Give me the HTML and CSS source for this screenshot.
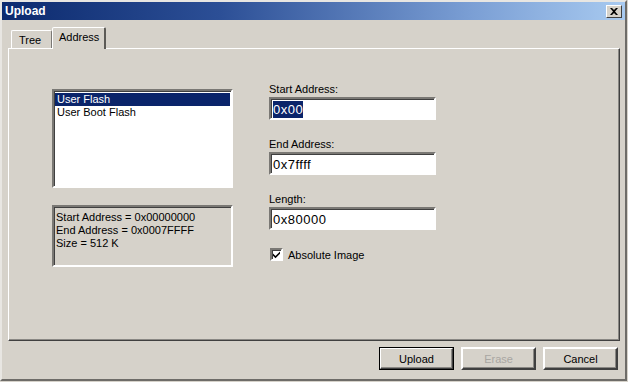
FILE: index.html
```html
<!DOCTYPE html>
<html lang="en">
<head>
    <meta charset="UTF-8">
    <title>Upload</title>
    <link rel="stylesheet" href="styles.css">
</head>
<body>
    <div class="window">
        <!-- Title bar -->
        <div class="title-bar">
            <span class="title">Upload</span>
            <button class="close-button">
                <svg width="8" height="7" viewBox="0 0 8 7"><path d="M0 0h2l2 2 2-2h2L5 3.5 8 7H6L4 5 2 7H0l3-3.5z" fill="#000"/></svg>
            </button>
        </div>

        <div class="content">
            <!-- Tabs -->
            <div class="tabs">
                <div class="tab">Tree</div>
                <div class="tab selected">Address</div>
            </div>

            <div class="panel">
                <div class="left-column">
                    <div class="listbox">
                        <div class="list-item selected">User Flash</div>
                        <div class="list-item">User Boot Flash</div>
                    </div>
                    <div class="info-box">
                        <div>Start Address = 0x00000000</div>
                        <div>End Address = 0x0007FFFF</div>
                        <div>Size = 512 K</div>
                    </div>
                </div>

                <div class="right-column">
                    <div class="field">
                        <label>Start Address:</label>
                        <div class="text-input"><span class="selection">0x00</span></div>
                    </div>
                    <div class="field">
                        <label>End Address:</label>
                        <div class="text-input">0x7ffff</div>
                    </div>
                    <div class="field">
                        <label>Length:</label>
                        <div class="text-input">0x80000</div>
                    </div>
                    <div class="checkbox-row">
                        <span class="checkbox">
                            <svg width="9" height="9" viewBox="0 0 9 9"><path d="M1 3.5l2.5 2.5L8 1.5v2.2L3.5 8.2 1 5.7z" fill="#000"/></svg>
                        </span>
                        <span>Absolute Image</span>
                    </div>
                </div>
            </div>

            <!-- Buttons -->
            <div class="footer">
                <button class="button default">Upload</button>
                <button class="button" disabled>Erase</button>
                <button class="button">Cancel</button>
            </div>
        </div>
    </div>
</body>
</html>
```
FILE: styles.css
```css
body {
    margin: 0;
    padding: 0;
    width: 628px;
    height: 382px;
    overflow: hidden;
    background-color: #d6d2ca;
    font-family: Tahoma, 'Liberation Sans', sans-serif;
    font-size: 11px;
    color: #000;
}

.window {
    box-sizing: border-box;
    width: 627px;
    height: 381px;
    border: 2px solid;
    border-color: #e8e6e2 #6e6c68 #6e6c68 #e8e6e2;
    background-color: #d6d2ca;
}

.title-bar {
    height: 18px;
    display: flex;
    align-items: center;
    justify-content: space-between;
    padding: 0 3px 0 3px;
    background: linear-gradient(to right, #0c2a6e, #2c4f96 35%, #7a9ed4 75%, #a8caf0);
}

.title {
    color: #fff;
    font-weight: bold;
    font-size: 12px;
}

.close-button {
    width: 16px;
    height: 13px;
    padding: 0;
    display: flex;
    justify-content: center;
    align-items: center;
    background-color: #d6d2ca;
    border: 1px solid;
    border-color: #fff #404040 #404040 #fff;
}

.content {
    padding: 7px 6px 0 6px;
}

.tabs {
    display: flex;
    align-items: flex-end;
    padding-left: 3px;
    height: 21px;
}

.tab {
    box-sizing: border-box;
    height: 18px;
    padding: 3px 8px 0 7px;
    border: 1px solid;
    border-bottom: none;
    border-color: #fff #7a7874 transparent #fff;
    border-radius: 2px 2px 0 0;
    width: 41px;
}

.tab.selected {
    height: 22px;
    width: 54px;
    margin-bottom: -1px;
    padding: 3px 0 0 6px;
    border-right: 2px solid #5c5a56;
    background-color: #d6d2ca;
    position: relative;
}

.panel {
    box-sizing: border-box;
    height: 293px;
    width: 612px;
    display: flex;
    align-items: flex-start;
    gap: 36px;
    padding: 34px 0 0 43px;
    border: 1px solid;
    border-color: #fff #404040 #404040 #fff;
    box-shadow: inset -1px -1px 0 #8a8884;
}

.left-column {
    width: 181px;
    margin-top: 6px;
    display: flex;
    flex-direction: column;
    gap: 17px;
}

.listbox,
.info-box {
    box-sizing: border-box;
    border: 2px solid;
    border-color: #7a7874 #fff #fff #7a7874;
    box-shadow: inset 1px 1px 0 #404040;
}

.listbox {
    height: 99px;
    background-color: #fff;
    padding: 2px 1px;
}

.list-item {
    height: 13px;
    line-height: 13px;
    padding-left: 2px;
}

.list-item.selected {
    background-color: #0a246a;
    color: #fff;
}

.info-box {
    height: 62px;
    padding: 4px 2px;
    line-height: 13px;
}

.right-column {
    width: 167px;
    display: flex;
    flex-direction: column;
    gap: 18px;
}

.field label {
    display: block;
    height: 13px;
    line-height: 13px;
    margin-bottom: 1px;
}

.text-input {
    box-sizing: border-box;
    height: 23px;
    padding: 3px 2px;
    background-color: #fff;
    border: 2px solid;
    border-color: #7a7874 #fff #fff #7a7874;
    box-shadow: inset 1px 1px 0 #404040;
    font-size: 13px;
    line-height: 15px;
    letter-spacing: 0.5px;
}

.selection {
    background-color: #0a246a;
    color: #fff;
    padding: 1px 0;
}

.checkbox-row {
    display: flex;
    align-items: center;
    gap: 5px;
    padding-left: 1px;
}

.checkbox {
    box-sizing: border-box;
    width: 13px;
    height: 13px;
    display: flex;
    justify-content: center;
    align-items: center;
    background-color: #fff;
    border: 2px solid;
    border-color: #7a7874 #fff #fff #7a7874;
    box-shadow: inset 1px 1px 0 #404040;
}

.footer {
    display: flex;
    justify-content: flex-end;
    gap: 7px;
    padding: 6px 1px 0 0;
}

.button {
    box-sizing: border-box;
    width: 75px;
    height: 23px;
    font-family: Tahoma, 'Liberation Sans', sans-serif;
    font-size: 11px;
    color: #000;
    background-color: #d6d2ca;
    border: 2px solid;
    border-color: #fff #404040 #404040 #fff;
    box-shadow: inset -1px -1px 0 #8a8884;
}

.button.default {
    outline: 1px solid #000;
    outline-offset: -1px;
}

.button:disabled {
    color: #a8a6a2;
}
```
